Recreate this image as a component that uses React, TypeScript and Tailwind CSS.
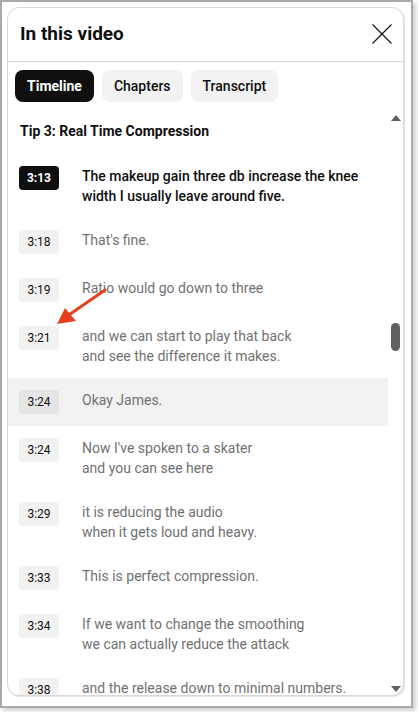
import { ReactNode } from "react";

type Line = {
  time: string;
  lines: string[];
  active?: boolean;
  hover?: boolean;
};

const rows: Line[] = [
  { time: "3:13", lines: ["The makeup gain three db increase the knee", "width I usually leave around five."], active: true },
  { time: "3:18", lines: ["That's fine."] },
  { time: "3:19", lines: ["Ratio would go down to three"] },
  { time: "3:21", lines: ["and we can start to play that back", "and see the difference it makes."] },
  { time: "3:24", lines: ["Okay James."], hover: true },
  { time: "3:24", lines: ["Now I've spoken to a skater", "and you can see here"] },
  { time: "3:29", lines: ["it is reducing the audio", "when it gets loud and heavy."] },
  { time: "3:33", lines: ["This is perfect compression."] },
  { time: "3:34", lines: ["If we want to change the smoothing", "we can actually reduce the attack"] },
  { time: "3:38", lines: ["and the release down to minimal numbers."] },
];

function Chip({ children, selected }: { children: ReactNode; selected?: boolean }) {
  return (
    <button
      className={
        selected
          ? "h-8 rounded-lg bg-[#0f0f0f] px-3 text-[14px] font-bold text-white"
          : "h-8 rounded-lg bg-[#f2f2f2] px-3 text-[14px] font-medium text-[#0f0f0f]"
      }
    >
      {children}
    </button>
  );
}

function Row({ row }: { row: Line }) {
  const badge = row.active
    ? "bg-[#0f0f0f] text-white font-bold"
    : row.hover
      ? "bg-[#e5e5e5] text-[#0f0f0f]"
      : "bg-[#f2f2f2] text-[#0f0f0f]";
  return (
    <div className={`flex gap-[23px] py-3 pl-[11px] ${row.hover ? "bg-[#f2f2f2]" : ""}`}>
      <div className={`flex h-6 w-10 shrink-0 items-center justify-center rounded text-[12px] ${badge}`}>
        {row.time}
      </div>
      <div
        className={`text-[14px] leading-5 whitespace-nowrap ${
          row.active ? "font-medium text-[#0f0f0f]" : "text-[#717171]"
        }`}
      >
        {row.lines.map((l, i) => (
          <div key={i}>{l}</div>
        ))}
      </div>
    </div>
  );
}

export default function App() {
  return (
    <div className="relative h-[712px] w-[418px] bg-white font-['Roboto',sans-serif]">
      <div className="h-[708px] w-[413px] border-2 border-[#a9a9a9] bg-white pt-[5px] pl-[5px] shadow-[3px_3px_4px_rgba(0,0,0,0.18)]">
        <div className="flex h-[689px] w-[397px] flex-col overflow-hidden rounded-xl border border-[#d9d9d9] bg-white shadow-[1px_1px_1px_rgba(0,0,0,0.12)]">
          <div className="flex h-[54px] shrink-0 items-center justify-between border-b border-[#d9d9d9] pr-[11px] pl-3">
            <h2 className="mt-[-1px] text-[19px] font-bold text-[#0f0f0f]">In this video</h2>
            <svg width="20" height="20" viewBox="0 0 20 20" className="mt-[-1px]">
              <path d="M0.5 0.5 L19.5 19.5 M19.5 0.5 L0.5 19.5" stroke="#0f0f0f" strokeWidth="1.1" />
            </svg>
          </div>
          <div className="flex shrink-0 gap-2 pt-2 pb-2 pl-[7px]">
            <Chip selected>Timeline</Chip>
            <Chip>Chapters</Chip>
            <Chip>Transcript</Chip>
          </div>
          <div className="flex min-h-0 flex-1">
            <div className="w-[380px] overflow-hidden">
              <div className="pt-[11px] pb-[13px] pl-3 text-[14px] leading-5 font-bold text-[#0f0f0f]">
                Tip 3: Real Time Compression
              </div>
              {rows.map((r, i) => (
                <Row key={i} row={r} />
              ))}
            </div>
            <div className="flex w-[14px] flex-col items-center pt-[5px] pb-[3px] pl-[1px]">
              <svg width="10" height="6" viewBox="0 0 10 6">
                <path d="M5 0 L10 6 L0 6 Z" fill="#606060" />
              </svg>
              <div className="mt-[202px] h-[28px] w-[9px] rounded-full bg-[#606060]" />
              <div className="flex-1" />
              <svg width="10" height="6" viewBox="0 0 10 6">
                <path d="M0 0 L10 0 L5 6 Z" fill="#606060" />
              </svg>
            </div>
          </div>
        </div>
      </div>
      <svg className="absolute top-[284px] left-[52px]" width="60" height="46" viewBox="52 284 60 46">
        <path d="M105 290 L63 319" stroke="#e5401d" strokeWidth="3" strokeLinecap="round" />
        <path d="M57 324 L65 308 L76 321 Z" fill="#e5401d" />
      </svg>
    </div>
  );
}
